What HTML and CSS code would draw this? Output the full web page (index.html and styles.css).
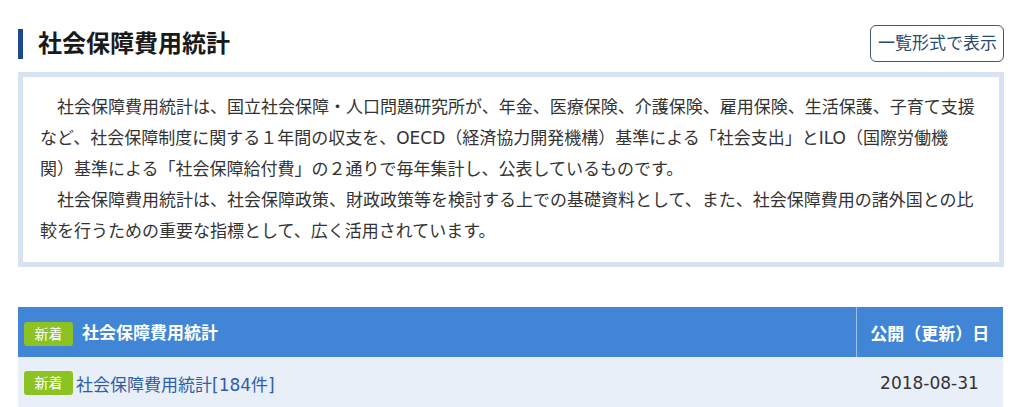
FILE: index.html
```html
<!DOCTYPE html>
<html lang="ja">
<head>
    <meta charset="UTF-8">
    <meta name="viewport" content="width=device-width, initial-scale=1.0">
    <title>社会保障費用統計</title>
    <link rel="stylesheet" href="styles.css">
</head>
<body>
    <div class="container">
        <!-- 見出し -->
        <div class="title-row">
            <h2 class="page-title">社会保障費用統計</h2>
            <a href="#" class="list-button">一覧形式で表示</a>
        </div>

        <!-- 説明 -->
        <div class="description">
            <p>社会保障費用統計は、国立社会保障・人口問題研究所が、年金、医療保険、介護保険、雇用保険、生活保護、子育て支援など、社会保障制度に関する１年間の収支を、OECD（経済協力開発機構）基準による「社会支出」とILO（国際労働機<br>関）基準による「社会保障給付費」の２通りで毎年集計し、公表しているものです。</p>
            <p>社会保障費用統計は、社会保障政策、財政政策等を検討する上での基礎資料として、また、社会保障費用の諸外国との比較を行うための重要な指標として、広く活用されています。</p>
        </div>

        <!-- 一覧 -->
        <table class="stat-table">
            <thead>
                <tr>
                    <th class="col-title"><span class="badge">新着</span>社会保障費用統計</th>
                    <th class="col-date">公開（更新）日</th>
                </tr>
            </thead>
            <tbody>
                <tr>
                    <td class="col-title"><span class="badge">新着</span><a href="#" class="stat-link">社会保障費用統計[184件]</a></td>
                    <td class="col-date">2018-08-31</td>
                </tr>
            </tbody>
        </table>
    </div>
</body>
</html>
```

FILE: styles.css
```css
* {
    box-sizing: border-box;
    margin: 0;
    padding: 0;
    font-family: "DejaVu Sans", "Noto Sans CJK JP", sans-serif;
}
body {
    background: #fff;
    color: #333;
}
.container {
    padding: 25px 20px 0 18px;
}
.title-row {
    display: flex;
    justify-content: space-between;
    align-items: center;
    height: 37px;
}
.page-title {
    border-left: 5px solid #1b4a8f;
    padding-left: 15px;
    font-size: 24px;
    font-weight: bold;
    line-height: 30px;
    color: #1a1a1a;
}
.list-button {
    display: block;
    height: 37px;
    line-height: 35px;
    padding: 0 6px 0 7px;
    border: 1px solid #3d5876;
    border-radius: 6px;
    color: #2c4a6e;
    font-size: 17px;
    text-decoration: none;
}
.description {
    margin-top: 10px;
    border: 5px solid #d8e3f2;
    padding: 15px 17px 15px 17px;
    font-size: 17px;
    line-height: 31px;
}
.description p {
    text-indent: 1em;
}
.stat-table {
    width: 985px;
    margin-top: 40px;
    border-collapse: collapse;
}
.stat-table th {
    background-color: #4085d6;
    color: #fff;
    font-size: 17px;
    font-weight: bold;
    height: 50px;
    text-align: left;
}
.stat-table td {
    background-color: #e9eff8;
    font-size: 17px;
    height: 52px;
}
.col-title {
    padding-left: 6px;
}
.stat-table th.col-title .badge {
    margin-right: 9px;
}
.stat-table td.col-title .badge {
    margin-right: 3px;
}
.stat-table .col-date {
    width: 147px;
    text-align: center;
    padding: 0;
}
.stat-table th.col-date {
    border-left: 1px solid #9cbfe8;
}
.badge {
    display: inline-block;
    width: 49px;
    height: 24px;
    line-height: 24px;
    border-radius: 3px;
    background-color: #8cc221;
    color: #fff;
    font-size: 14px;
    font-weight: normal;
    text-align: center;
    vertical-align: middle;
}
.stat-link {
    color: #2f5ea6;
    text-decoration: none;
    vertical-align: middle;
}
```
